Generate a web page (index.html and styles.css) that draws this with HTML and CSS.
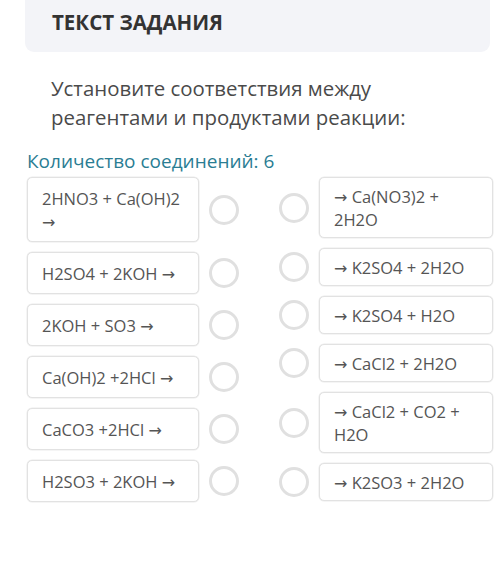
FILE: index.html
```html
<!DOCTYPE html>
<html lang="ru">
<head>
<meta charset="utf-8">
<link rel="stylesheet" href="styles.css">
</head>
<body>
<div class="page">
  <div class="task-head">ТЕКСТ ЗАДАНИЯ</div>
  <p class="task-text">Установите соответствия между реагентами и продуктами реакции:</p>
  <div class="count">Количество соединений: 6</div>
  <div class="match">
    <div class="col left">
      <div class="row"><div class="card">2HNO3 + Ca(OH)2 <span class="arr">→</span></div><span class="dot"></span></div>
      <div class="row"><div class="card">H2SO4 + 2KOH <span class="arr">→</span></div><span class="dot"></span></div>
      <div class="row"><div class="card">2KOH + SO3 <span class="arr">→</span></div><span class="dot"></span></div>
      <div class="row"><div class="card">Ca(OH)2 +2HCl <span class="arr">→</span></div><span class="dot"></span></div>
      <div class="row"><div class="card">CaCO3 +2HCl <span class="arr">→</span></div><span class="dot"></span></div>
      <div class="row"><div class="card">H2SO3 + 2KOH <span class="arr">→</span></div><span class="dot"></span></div>
    </div>
    <div class="col right">
      <div class="row"><span class="dot"></span><div class="card"><span class="arr">→</span> Ca(NO3)2 + 2H2O</div></div>
      <div class="row"><span class="dot"></span><div class="card"><span class="arr">→</span> K2SO4 + 2H2O</div></div>
      <div class="row"><span class="dot"></span><div class="card"><span class="arr">→</span> K2SO4 + H2O</div></div>
      <div class="row"><span class="dot"></span><div class="card"><span class="arr">→</span> CaCl2 + 2H2O</div></div>
      <div class="row"><span class="dot"></span><div class="card"><span class="arr">→</span> CaCl2 + CO2 + H2O</div></div>
      <div class="row"><span class="dot"></span><div class="card"><span class="arr">→</span> K2SO3 + 2H2O</div></div>
    </div>
  </div>
</div>
</body>
</html>
```

FILE: styles.css
```css
html, body {
  margin: 0;
  padding: 0;
  background: #ffffff;
}
body {
  font-family: "Open Sans", "Noto Sans", sans-serif;
  color: #444;
}
.page {
  width: 500px;
  height: 574px;
  overflow: hidden;
}
.task-head {
  margin: 0 10px 0 25px;
  height: 52px;
  box-sizing: border-box;
  padding: 8px 0 0 27px;
  background: #f3f4f8;
  border-radius: 0 0 9px 9px;
  font-size: 20.5px;
  font-weight: 700;
  color: #333;
  line-height: 28px;
}
.task-text {
  margin: 22px 0 0 51px;
  width: 400px;
  font-size: 20.4px;
  line-height: 28.5px;
  color: #4a4a4a;
}
.count {
  margin: 17px 0 0 27px;
  font-size: 19px;
  line-height: 26px;
  color: #2a7d93;
}
.match {
  display: flex;
  margin: 0 0 0 27px;
  padding-top: 3px;
}
.col {
  display: flex;
  flex-direction: column;
  gap: 10px;
}
.left {
  width: 252px;
}
.row {
  display: flex;
  align-items: center;
}
.card {
  box-sizing: border-box;
  width: 172px;
  border: 1px solid #e2e2e2;
  border-radius: 5px;
  padding: 8.5px 14px;
  font-size: 16.5px;
  line-height: 23px;
  color: #555;
  background: #fff;
  box-shadow: 0 0 0 0.5px #ececec;
}
.arr {
  font-family: "DejaVu Sans", sans-serif;
  font-size: 16px;
  line-height: 1;
}
.right .card {
  width: 174px;
  padding: 6.5px 14px;
}
.dot {
  flex: none;
  box-sizing: border-box;
  width: 30px;
  height: 30px;
  border-radius: 50%;
  border: 3px solid #e0e0e0;
  background: #fff;
}
.left .dot {
  margin-left: 10px;
}
.right .dot {
  margin-right: 10px;
}
```
